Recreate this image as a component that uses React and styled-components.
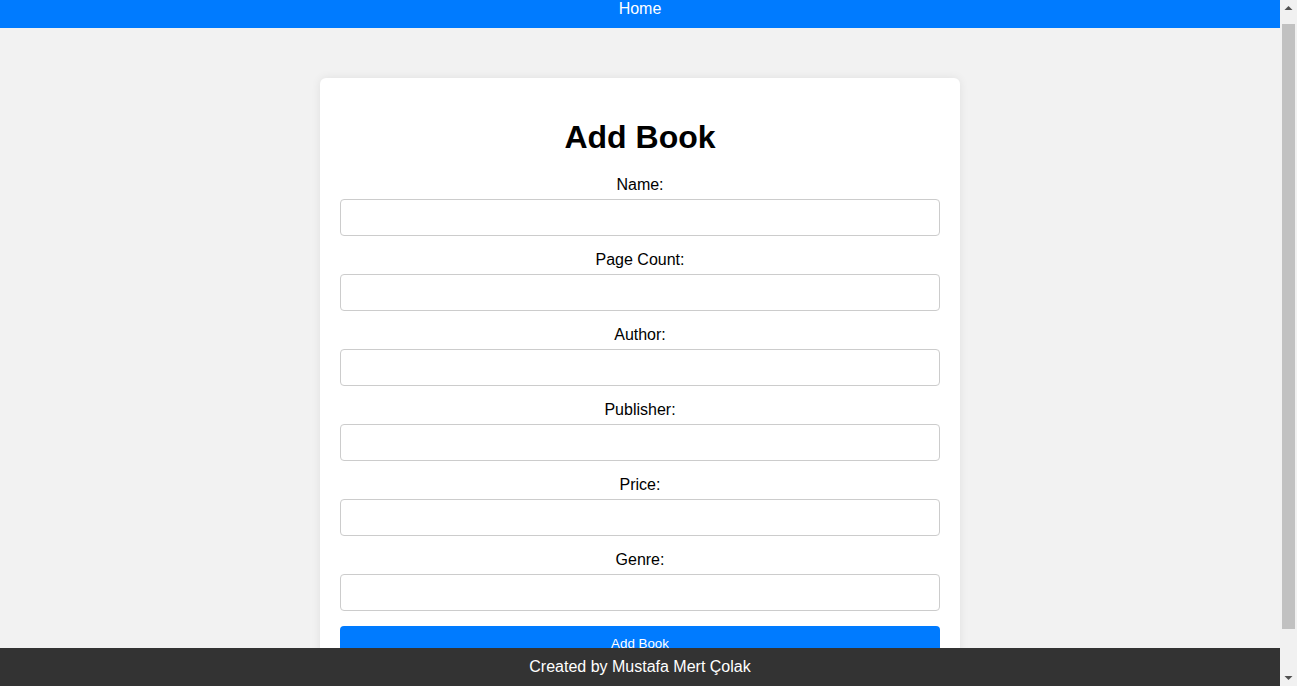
import React from 'react';
import styled, { createGlobalStyle } from 'styled-components';

const GlobalStyle = createGlobalStyle`
    body {
        margin: 0;
        background-color: #f2f2f2;
        font-family: "Liberation Sans", Arial, sans-serif;
        color: #000;
    }
`;

const fields = ['Name', 'Page Count', 'Author', 'Publisher', 'Price', 'Genre'];

export default function App() {
    return (
        <Page>
            <GlobalStyle />
            <Header>
                <NavLink href="#">Home</NavLink>
            </Header>
            <Main>
                <Card>
                    <Title>Add Book</Title>
                    <form onSubmit={e => e.preventDefault()}>
                        {fields.map(f => (
                            <FormGroup key={f}>
                                <Label>{f}:</Label>
                                <Input type="text" />
                            </FormGroup>
                        ))}
                        <SubmitButton type="submit">Add Book</SubmitButton>
                    </form>
                </Card>
            </Main>
            <Footer>Created by Mustafa Mert Çolak</Footer>
            <ScrollBar>
                <ScrollArrow>
                    <svg width="17" height="17" viewBox="0 0 17 17">
                        <path d="M4.5 10h8l-4-4z" fill="#505050" />
                    </svg>
                </ScrollArrow>
                <ScrollTrack>
                    <ScrollThumb />
                </ScrollTrack>
                <ScrollArrow>
                    <svg width="17" height="17" viewBox="0 0 17 17">
                        <path d="M4.5 7h8l-4 4z" fill="#505050" />
                    </svg>
                </ScrollArrow>
            </ScrollBar>
        </Page>
    );
}

const Page = styled.div`
    margin-right: 17px;
`;

const Header = styled.header`
    background-color: #007bff;
    height: 28px;
    display: flex;
    justify-content: center;
    align-items: flex-start;
`;

const NavLink = styled.a`
    color: #fff;
    text-decoration: none;
    font-size: 16px;
    line-height: 18px;
`;

const Main = styled.main`
    padding: 50px 0 60px;
`;

const Card = styled.div`
    width: 600px;
    margin: 0 auto;
    padding: 20px;
    background-color: #fff;
    border-radius: 6px;
    box-shadow: 0 0 10px rgba(0, 0, 0, 0.08);
    text-align: center;
`;

const Title = styled.h1`
    font-size: 32px;
    margin: 21px 0 20px;
`;

const FormGroup = styled.div`
    margin-bottom: 15px;
`;

const Label = styled.label`
    display: block;
    font-size: 16px;
    line-height: 18px;
    margin-bottom: 5px;
`;

const Input = styled.input`
    display: block;
    width: 100%;
    height: 37px;
    box-sizing: border-box;
    padding: 8px;
    font-size: 16px;
    font-family: inherit;
    border: 1px solid #ccc;
    border-radius: 4px;
`;

const SubmitButton = styled.button`
    width: 100%;
    padding: 10px;
    border: none;
    border-radius: 4px;
    background-color: #007bff;
    color: #fff;
    font-family: inherit;
    font-size: 13.33px;
    cursor: pointer;
`;

const Footer = styled.footer`
    position: fixed;
    left: 0;
    right: 17px;
    bottom: 0;
    height: 38px;
    background-color: #333;
    color: #fff;
    font-size: 16px;
    display: flex;
    align-items: center;
    justify-content: center;
`;

const ScrollBar = styled.div`
    position: fixed;
    top: 0;
    right: 0;
    bottom: 0;
    width: 17px;
    background-color: #f1f1f1;
    display: flex;
    flex-direction: column;
`;

const ScrollArrow = styled.div`
    height: 17px;
    display: flex;

    svg {
        display: block;
    }
`;

const ScrollTrack = styled.div`
    flex: 1;
    padding: 7px 2px 0;
`;

const ScrollThumb = styled.div`
    height: 605px;
    background-color: #c1c1c1;
`;
